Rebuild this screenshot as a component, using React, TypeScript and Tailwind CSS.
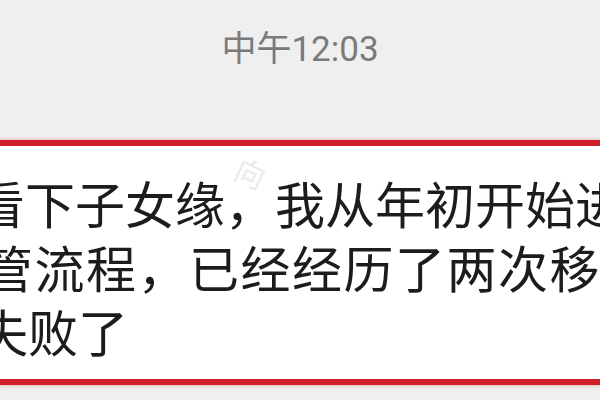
import React from 'react';

const lines = [
  { text: '看下子女缘，我从年初开始进', offset: '-ml-[25px]', spacing: 'tracking-[0px]' },
  { text: '管流程，已经经历了两次移', offset: '-ml-[17px]', spacing: 'tracking-[1.5px]' },
  { text: '失败了', offset: '-ml-[22px]', spacing: 'tracking-[0px]' },
];

export default function App() {
  return (
    <div className="w-[600px] h-[400px] bg-[#efefef] overflow-hidden flex flex-col">
      {/* timestamp */}
      <div className="h-[140px] shrink-0 flex justify-center pt-[30px]">
        <span className="text-[35px] leading-[40px] text-[#7a7a7a] font-['Roboto','Noto_Sans_CJK_SC',sans-serif]">
          中午12:03
        </span>
      </div>

      {/* highlighted message */}
      <div className="relative h-[245px] shrink-0 bg-white border-y-[6px] border-[#cf1f2b] shadow-[0_0_4px_rgba(225,60,70,0.45)] overflow-hidden pt-[24px]">
        <span className="absolute left-[236px] top-[4px] rotate-[25deg] text-[30px] text-[#ebebeb] font-['Noto_Sans_CJK_SC',sans-serif]">
          向
        </span>
        <div className="relative flex flex-col">
          {lines.map((l) => (
            <div
              key={l.text}
              className={`${l.offset} ${l.spacing} whitespace-nowrap text-[50px] leading-[64px] text-[#1c1c1c] font-['Noto_Sans_CJK_SC',sans-serif]`}
            >
              {l.text}
            </div>
          ))}
        </div>
      </div>
    </div>
  );
}
